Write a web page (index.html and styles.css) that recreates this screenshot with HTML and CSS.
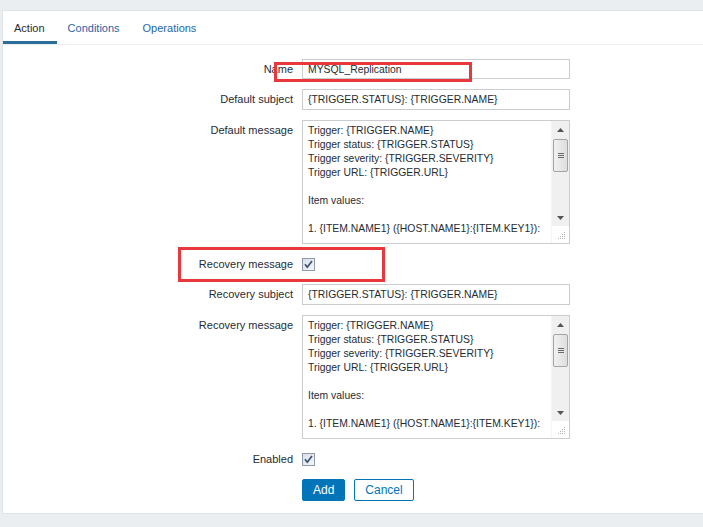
FILE: index.html
```html
<!DOCTYPE html>
<html>
<head>
<meta charset="utf-8">
<link rel="stylesheet" href="styles.css">
</head>
<body>
<div class="panel">
  <div class="tabs">
    <div class="tab active">Action</div>
    <div class="tab">Conditions</div>
    <div class="tab">Operations</div>
  </div>
  <div class="form">
    <div class="label short">Name</div>
    <div class="input short">MYSQL_Replication</div>

    <div class="label">Default subject</div>
    <div class="input">{TRIGGER.STATUS}: {TRIGGER.NAME}</div>

    <div class="label">Default message</div>
    <div class="textarea">
      <div class="ta-text">Trigger: {TRIGGER.NAME}<br>Trigger status: {TRIGGER.STATUS}<br>Trigger severity: {TRIGGER.SEVERITY}<br>Trigger URL: {TRIGGER.URL}<br><br>Item values:<br><br>1. {ITEM.NAME1} ({HOST.NAME1}:{ITEM.KEY1}):</div>
      <div class="sb">
        <div class="sb-btn"><svg width="7" height="4" viewBox="0 0 7 4"><path d="M0 4 L3.5 0 L7 4 Z" fill="#555"/></svg></div>
        <div class="sb-thumb"><span></span><span></span><span></span></div>
        <div class="sb-track"></div>
        <div class="sb-btn"><svg width="7" height="4" viewBox="0 0 7 4"><path d="M0 0 L3.5 4 L7 0 Z" fill="#555"/></svg></div>
        <div class="sb-grip"><svg width="8" height="8" viewBox="0 0 8 8"><g fill="#b5b5b5"><rect x="6" y="0" width="1" height="1"/><rect x="4" y="2" width="1" height="1"/><rect x="6" y="2" width="1" height="1"/><rect x="2" y="4" width="1" height="1"/><rect x="4" y="4" width="1" height="1"/><rect x="6" y="4" width="1" height="1"/><rect x="0" y="6" width="1" height="1"/><rect x="2" y="6" width="1" height="1"/><rect x="4" y="6" width="1" height="1"/><rect x="6" y="6" width="1" height="1"/></g></svg></div>
      </div>
    </div>

    <div class="label check-label">Recovery message</div>
    <div class="check-cell">
      <svg class="cb" width="13" height="13" viewBox="0 0 13 13"><defs><linearGradient id="g1" x1="0" y1="0" x2="1" y2="1"><stop offset="0" stop-color="#d9dee7"/><stop offset="1" stop-color="#f4f6f9"/></linearGradient></defs><rect x="0.5" y="0.5" width="12" height="12" fill="url(#g1)" stroke="#8e99ab"/><path d="M3 6.2 L5.3 9.2 L10 3" fill="none" stroke="#3d4f70" stroke-width="1.7"/></svg>
    </div>

    <div class="label">Recovery subject</div>
    <div class="input">{TRIGGER.STATUS}: {TRIGGER.NAME}</div>

    <div class="label">Recovery message</div>
    <div class="textarea">
      <div class="ta-text">Trigger: {TRIGGER.NAME}<br>Trigger status: {TRIGGER.STATUS}<br>Trigger severity: {TRIGGER.SEVERITY}<br>Trigger URL: {TRIGGER.URL}<br><br>Item values:<br><br>1. {ITEM.NAME1} ({HOST.NAME1}:{ITEM.KEY1}):</div>
      <div class="sb">
        <div class="sb-btn"><svg width="7" height="4" viewBox="0 0 7 4"><path d="M0 4 L3.5 0 L7 4 Z" fill="#555"/></svg></div>
        <div class="sb-thumb"><span></span><span></span><span></span></div>
        <div class="sb-track"></div>
        <div class="sb-btn"><svg width="7" height="4" viewBox="0 0 7 4"><path d="M0 0 L3.5 4 L7 0 Z" fill="#555"/></svg></div>
        <div class="sb-grip"><svg width="8" height="8" viewBox="0 0 8 8"><g fill="#b5b5b5"><rect x="6" y="0" width="1" height="1"/><rect x="4" y="2" width="1" height="1"/><rect x="6" y="2" width="1" height="1"/><rect x="2" y="4" width="1" height="1"/><rect x="4" y="4" width="1" height="1"/><rect x="6" y="4" width="1" height="1"/><rect x="0" y="6" width="1" height="1"/><rect x="2" y="6" width="1" height="1"/><rect x="4" y="6" width="1" height="1"/><rect x="6" y="6" width="1" height="1"/></g></svg></div>
      </div>
    </div>

    <div class="label check-label">Enabled</div>
    <div class="check-cell">
      <svg class="cb" width="13" height="13" viewBox="0 0 13 13"><defs><linearGradient id="g2" x1="0" y1="0" x2="1" y2="1"><stop offset="0" stop-color="#d9dee7"/><stop offset="1" stop-color="#f4f6f9"/></linearGradient></defs><rect x="0.5" y="0.5" width="12" height="12" fill="url(#g2)" stroke="#8e99ab"/><path d="M3 6.2 L5.3 9.2 L10 3" fill="none" stroke="#3d4f70" stroke-width="1.7"/></svg>
    </div>

    <div></div>
    <div class="buttons">
      <button class="btn primary">Add</button>
      <button class="btn secondary">Cancel</button>
    </div>
  </div>
  <div class="mark mark-name"></div>
  <div class="mark mark-recovery"></div>
</div>
</body>
</html>
```

FILE: styles.css
```css
html, body {
  margin: 0;
  padding: 0;
}
body {
  background: #ebeef0;
  font-family: "Liberation Sans", Arial, sans-serif;
  font-size: 11px;
  color: #1f2c33;
  height: 527px;
  overflow: hidden;
}
.panel {
  position: relative;
  margin: 10px 0 0 2px;
  width: 720px;
  background: #fff;
  border: 1px solid #dfe4e7;
  box-sizing: border-box;
  padding-bottom: 12px;
}
.tabs {
  display: flex;
  border-bottom: 1px solid #ebeef0;
  height: 33px;
}
.tab {
  padding: 10px 12px 6px 11px;
  line-height: 14px;
  color: #1f65a6;
  border-bottom: 3px solid transparent;
}
.tab.active {
  color: #1f2c33;
  border-bottom-color: #2b6e99;
}
.form {
  display: grid;
  grid-template-columns: 290px 268px;
  column-gap: 9px;
  row-gap: 10px;
  padding-top: 14px;
}
.label {
  text-align: right;
  line-height: 21px;
  white-space: nowrap;
}
.label.short {
  line-height: 20px;
}
.label.check-label {
  line-height: 20px;
}
.input {
  height: 21px;
  box-sizing: border-box;
  border: 1px solid #c9cdd0;
  padding: 0 5px;
  line-height: 19px;
  font-size: 10.4px;
  white-space: nowrap;
  overflow: hidden;
}
.input.short {
  height: 20px;
  padding-top: 1px;
  line-height: 17px;
}
.textarea {
  height: 124px;
  box-sizing: border-box;
  border: 1px solid #c9cdd0;
  display: flex;
  overflow: hidden;
}
.ta-text {
  flex: 1;
  padding: 3px 0 0 5px;
  line-height: 14px;
  font-size: 10.4px;
  white-space: nowrap;
  overflow: hidden;
}
.sb {
  width: 17px;
  flex: none;
  display: flex;
  flex-direction: column;
  background: #f0f0f0;
  border-left: 1px solid #f4f4f4;
}
.sb-btn {
  height: 17px;
  display: flex;
  align-items: center;
  justify-content: center;
}
.sb-thumb {
  margin: 1px 1px 0 1px;
  height: 33px;
  box-sizing: border-box;
  border: 1px solid #a4a4a4;
  border-radius: 2px;
  background: linear-gradient(to right, #f1f1f1, #dedede);
  display: flex;
  flex-direction: column;
  align-items: center;
  justify-content: center;
  gap: 1px;
}
.sb-thumb span {
  display: block;
  width: 6px;
  height: 1px;
  background: #6a6a6a;
}
.sb-track {
  flex: 1;
}
.sb-grip {
  height: 17px;
  background: #fff;
  display: flex;
  align-items: flex-end;
  justify-content: flex-end;
  padding: 0 3px 3px 0;
  box-sizing: border-box;
}
.check-cell {
  height: 20px;
  display: flex;
  align-items: center;
}
.cb {
  display: block;
}
.buttons {
  display: flex;
  gap: 9px;
}
.btn {
  font-family: "Liberation Sans", Arial, sans-serif;
  font-size: 12px;
  height: 22px;
  padding: 0 10px;
  border-radius: 2px;
  border: 1px solid #0275b8;
  box-sizing: border-box;
  line-height: 20px;
  margin: 0;
}
.btn.primary {
  background: #0275b8;
  color: #fff;
  width: 43px;
}
.btn.secondary {
  background: #fff;
  color: #0275b8;
  width: 60px;
}
.mark {
  position: absolute;
  border: 3px solid #e8383d;
  box-sizing: border-box;
}
.mark-name {
  left: 271px;
  top: 51px;
  width: 198px;
  height: 20px;
}
.mark-recovery {
  left: 175px;
  top: 236px;
  width: 207px;
  height: 35px;
}
```
